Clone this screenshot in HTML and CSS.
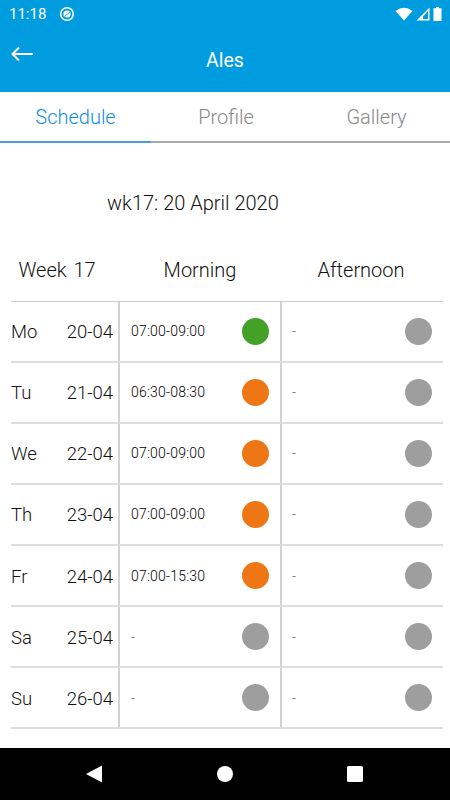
FILE: index.html
```html
<!DOCTYPE html>
<html lang="en">
<head>
    <meta charset="UTF-8">
    <meta name="viewport" content="width=device-width, initial-scale=1.0">
    <title>Ales</title>
    <link rel="stylesheet" href="styles.css">
</head>
<body>
    <div class="screen">
        <div class="status-bar">
            <div class="status-left">
                <span class="clock">11:18</span>
                <svg class="sync-icon" width="16" height="16" viewBox="0 0 16 16">
                    <circle cx="8" cy="8" r="6.3" fill="none" stroke="#fff" stroke-width="1.6"/>
                    <circle cx="8" cy="8" r="3.6" fill="#fff"/>
                    <path d="M5.5 10.5 L11 6" stroke="#009ce0" stroke-width="1"/>
                </svg>
            </div>
            <div class="status-right">
                <svg width="18" height="14" viewBox="0 0 18 14"><path d="M0.5 4 Q9 -2.5 17.5 4 L9 13.5 Z" fill="#fff"/></svg>
                <svg width="14" height="14" viewBox="0 0 14 14"><path d="M13.5 0.5 V13.5 H0.5 Z M12 4 L7 9.5 V12 H12 Z" fill="#fff" fill-rule="evenodd"/></svg>
                <svg width="9" height="14" viewBox="0 0 9 14"><path d="M3 0 H6 V1.2 H8.5 V14 H0.5 V1.2 H3 Z" fill="#fff"/></svg>
            </div>
        </div>

        <header class="app-bar">
            <svg class="back-icon" width="24" height="16" viewBox="0 0 24 16">
                <path d="M23 8 H3 M9 1.5 L2.5 8 L9 14.5" fill="none" stroke="#fff" stroke-width="2"/>
            </svg>
            <h1>Ales</h1>
        </header>

        <nav class="tabs">
            <div class="tab active">Schedule</div>
            <div class="tab">Profile</div>
            <div class="tab gallery">Gallery</div>
        </nav>

        <main class="content">
            <h2 class="week-title">wk17: 20 April 2020</h2>

            <div class="table-head">
                <div class="head-week">Week 17</div>
                <div class="head-morning">Morning</div>
                <div class="head-afternoon">Afternoon</div>
            </div>

            <div class="schedule">
                <div class="row">
                    <div class="day"><span>Mo</span><span>20-04</span></div>
                    <div class="slot"><span class="time">07:00-09:00</span><span class="dot green"></span></div>
                    <div class="slot"><span class="time none">-</span><span class="dot grey"></span></div>
                </div>
                <div class="row">
                    <div class="day"><span>Tu</span><span>21-04</span></div>
                    <div class="slot"><span class="time">06:30-08:30</span><span class="dot orange"></span></div>
                    <div class="slot"><span class="time none">-</span><span class="dot grey"></span></div>
                </div>
                <div class="row">
                    <div class="day"><span>We</span><span>22-04</span></div>
                    <div class="slot"><span class="time">07:00-09:00</span><span class="dot orange"></span></div>
                    <div class="slot"><span class="time none">-</span><span class="dot grey"></span></div>
                </div>
                <div class="row">
                    <div class="day"><span>Th</span><span>23-04</span></div>
                    <div class="slot"><span class="time">07:00-09:00</span><span class="dot orange"></span></div>
                    <div class="slot"><span class="time none">-</span><span class="dot grey"></span></div>
                </div>
                <div class="row">
                    <div class="day"><span>Fr</span><span>24-04</span></div>
                    <div class="slot"><span class="time">07:00-15:30</span><span class="dot orange"></span></div>
                    <div class="slot"><span class="time none">-</span><span class="dot grey"></span></div>
                </div>
                <div class="row">
                    <div class="day"><span>Sa</span><span>25-04</span></div>
                    <div class="slot"><span class="time none">-</span><span class="dot grey"></span></div>
                    <div class="slot"><span class="time none">-</span><span class="dot grey"></span></div>
                </div>
                <div class="row">
                    <div class="day"><span>Su</span><span>26-04</span></div>
                    <div class="slot"><span class="time none">-</span><span class="dot grey"></span></div>
                    <div class="slot"><span class="time none">-</span><span class="dot grey"></span></div>
                </div>
            </div>
        </main>

        <footer class="nav-bar">
            <svg width="18" height="18" viewBox="0 0 18 18"><path d="M1 9 L17 0.5 V17.5 Z" fill="#fff"/></svg>
            <svg width="18" height="18" viewBox="0 0 18 18"><circle cx="9" cy="9" r="8" fill="#fff"/></svg>
            <svg width="18" height="18" viewBox="0 0 18 18"><rect x="1" y="1" width="16" height="16" rx="1.5" fill="#fff"/></svg>
        </footer>
    </div>
</body>
</html>
```
FILE: styles.css
```css
* {
    box-sizing: border-box;
}

body {
    margin: 0;
    font-family: Roboto, "Liberation Sans", sans-serif;
    font-weight: 300;
    color: #111;
    background-color: #fff;
}

.screen {
    width: 450px;
    height: 800px;
    display: flex;
    flex-direction: column;
    overflow: hidden;
}

.status-bar {
    height: 28px;
    padding: 0 8px 0 9px;
    background-color: #009ce0;
    color: #fff;
    display: flex;
    justify-content: space-between;
    align-items: center;
}

.status-left {
    display: flex;
    align-items: center;
    gap: 13px;
}

.clock {
    font-size: 15px;
    font-weight: 400;
}

.status-right {
    display: flex;
    align-items: center;
    gap: 3px;
}

.app-bar {
    height: 64px;
    background-color: #009ce0;
    position: relative;
    display: flex;
    justify-content: center;
    padding-top: 20px;
}

.app-bar h1 {
    margin: 0;
    color: #fff;
    font-size: 19.5px;
    font-weight: 400;
    line-height: 26px;
}

.back-icon {
    position: absolute;
    left: 10px;
    top: 18px;
}

.tabs {
    height: 51px;
    display: flex;
    font-size: 20px;
}

.tab {
    width: 150px;
    text-align: center;
    line-height: 50px;
    color: #888;
    border-bottom: 2px solid #aaa;
}

.tab.active {
    width: 151px;
    color: #0f8fe3;
    border-bottom-color: #4a9be0;
}

.tab.gallery {
    width: 149px;
    padding-left: 2px;
}

.content {
    flex: 1;
    padding: 0 7px 0 11px;
}

.week-title {
    margin: 48px 0 0;
    padding-left: 96px;
    font-size: 20px;
    font-weight: 300;
    line-height: 24px;
}

.table-head {
    display: flex;
    margin-top: 43px;
    font-size: 20px;
    line-height: 24px;
    text-align: center;
}

.head-week {
    width: 92px;
    word-spacing: 2px;
}

.head-morning {
    width: 194px;
}

.head-afternoon {
    width: 128px;
}

.schedule {
    margin-top: 18.5px;
    border-top: 1px solid #ccc;
}

.row {
    display: flex;
    height: 61.15px;
    border-bottom: 2px solid #ddd;
}

.day {
    width: 107px;
    padding: 2px 5px 0 0;
    display: flex;
    justify-content: space-between;
    align-items: center;
    font-size: 18.5px;
}

.slot {
    width: 162px;
    padding: 0 11px 0 11px;
    border-left: 2px solid #d2d2d2;
    display: flex;
    justify-content: space-between;
    align-items: center;
}

.slot:last-child {
    flex: 1;
    padding-left: 10px;
}

.time {
    font-size: 14px;
    font-weight: 300;
    letter-spacing: 0.2px;
    color: #000;
}

.time.none {
    color: #666;
}

.dot {
    width: 27px;
    height: 27px;
    border-radius: 50%;
}

.dot.green {
    background-color: #43a127;
}

.dot.orange {
    background-color: #ef7615;
}

.dot.grey {
    background-color: #9e9e9e;
}

.nav-bar {
    height: 52px;
    background-color: #000;
    display: flex;
    justify-content: space-between;
    align-items: center;
    padding: 0 86px 0 85px;
}
```
